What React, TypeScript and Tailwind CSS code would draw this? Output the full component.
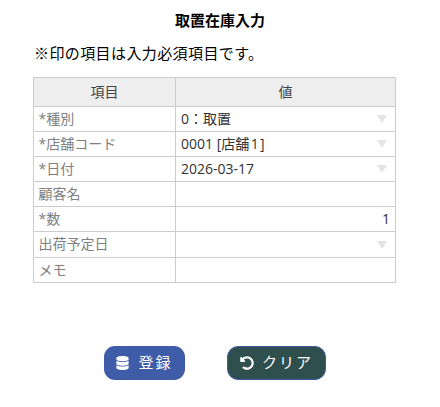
import React from "react";
import { FaDatabase, FaUndoAlt } from "react-icons/fa";

const rows = [
  { label: "*種別", value: "0：取置", select: true },
  { label: "*店舗コード", value: "0001 [店舗\u200a1\u200a]", select: true },
  { label: "*日付", value: "2026-03-17", select: true },
  { label: "顧客名", value: "" },
  { label: "*数", value: "1", right: true },
  { label: "出荷予定日", value: "", select: true, tall: true },
  { label: "メモ", value: "" },
];

export default function App() {
  return (
    <div className="w-[440px] h-[407px] bg-white text-[#212529] font-['Open_Sans','Noto_Sans_CJK_JP',sans-serif] overflow-hidden">
      <h1 className="pt-[10px] pb-[1px] text-center text-[15px] leading-[20px] font-bold text-black">
        取置在庫入力
      </h1>
      <p className="mt-[12px] ml-[34px] text-[15px] leading-[21px] tracking-[0.4px] text-black">
        ※印の項目は入力必須項目です。
      </p>
      <table className="mt-[13px] ml-[33px] w-[363px] table-fixed border-collapse text-[14px]">
        <thead>
          <tr className="h-[29px] bg-[#eeeeee] text-[#444444]">
            <th className="w-[142px] border border-[#cccccc] pb-[2px] font-normal">項目</th>
            <th className="border border-[#cccccc] pb-[2px] font-normal">値</th>
          </tr>
        </thead>
        <tbody>
          {rows.map((row) => (
            <tr key={row.label} className={row.tall ? "h-[26px]" : "h-[25px]"}>
              <td className="border border-[#cccccc] pl-[5px] pr-[4px] py-0 text-[#808080]">
                <div className="-ml-[0.5px] pb-[2px]">{row.label}</div>
              </td>
              <td className="border border-[#cccccc] px-[5px] py-0 text-[#333333]">
                <div className="flex items-center justify-between">
                  <span className={row.right ? "ml-auto pb-[2px]" : "pb-[2px]"}>{row.value}</span>
                  {row.select && (
                    <span className="mr-[3px] h-0 w-0 border-x-[5px] border-t-[8px] border-x-transparent border-t-[#e4e4e4]" />
                  )}
                </div>
              </td>
            </tr>
          ))}
        </tbody>
      </table>
      <div className="mt-[63px] flex">
        <button
          type="button"
          className="ml-[104px] flex h-[34px] w-[81px] items-center justify-center gap-[9px] rounded-[11px] bg-[#3f5ca8] text-[15px] text-white"
        >
          <FaDatabase className="h-[14px] w-[13px]" />
          <span className="pb-[2px] tracking-[2px]">登録</span>
        </button>
        <button
          type="button"
          className="ml-[42px] flex h-[34px] w-[99px] items-center justify-center gap-[8px] rounded-[11px] border border-[#3f5ca8] bg-[#2f4f4f] text-[15px] text-white"
        >
          <FaUndoAlt className="h-[14px] w-[14px]" />
          <span className="pb-[2px] tracking-[2px]">クリア</span>
        </button>
      </div>
    </div>
  );
}
